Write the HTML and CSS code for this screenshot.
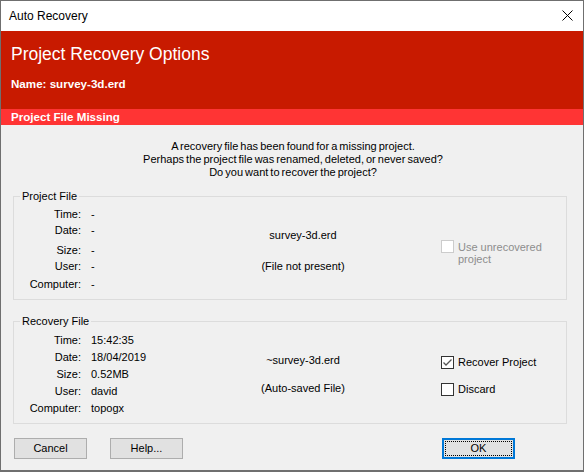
FILE: index.html
```html
<!DOCTYPE html>
<html>
<head>
<meta charset="utf-8">
<title>Auto Recovery</title>
<link rel="stylesheet" href="styles.css">
</head>
<body>
<div class="window">
  <div class="titlebar">
    <span class="title">Auto Recovery</span>
    <svg class="close" width="11" height="11" viewBox="0 0 11 11"><path d="M0.5 0.5 L10.5 10.5 M10.5 0.5 L0.5 10.5" stroke="#000" stroke-width="1" fill="none"/></svg>
  </div>
  <div class="header">
    <div class="header-title">Project Recovery Options</div>
    <div class="header-name">Name: survey-3d.erd</div>
  </div>
  <div class="subbar">Project File Missing</div>
  <div class="content">
    <div class="message">A recovery file has been found for a missing project.<br>Perhaps the project file was renamed, deleted, or never saved?<br>Do you want to recover the project?</div>

    <div class="group group-project">
      <div class="group-title">Project File</div>
      <div class="group-row">
        <div class="info info-project">
          <span class="lbl">Time:</span><span class="val">-</span>
          <span class="lbl">Date:</span><span class="val">-</span>
          <span class="lbl">Size:</span><span class="val">-</span>
          <span class="lbl">User:</span><span class="val">-</span>
          <span class="lbl">Computer:</span><span class="val">-</span>
        </div>
        <div class="file file-project">
          <div class="file-line">survey-3d.erd</div>
          <div class="file-line">(File not present)</div>
        </div>
        <div class="options options-project">
          <div class="check disabled">
            <span class="box"></span>
            <span class="check-label">Use unrecovered<br>project</span>
          </div>
        </div>
      </div>
    </div>

    <div class="group group-recovery">
      <div class="group-title">Recovery File</div>
      <div class="group-row">
        <div class="info info-recovery">
          <span class="lbl">Time:</span><span class="val">15:42:35</span>
          <span class="lbl">Date:</span><span class="val">18/04/2019</span>
          <span class="lbl">Size:</span><span class="val">0.52MB</span>
          <span class="lbl">User:</span><span class="val">david</span>
          <span class="lbl">Computer:</span><span class="val">topogx</span>
        </div>
        <div class="file file-recovery">
          <div class="file-line">~survey-3d.erd</div>
          <div class="file-line">(Auto-saved File)</div>
        </div>
        <div class="options options-recovery">
          <div class="check">
            <span class="box"><svg width="11" height="11" viewBox="0 0 11 11"><path d="M1.5 5.5 L4 8 L9.5 2.5" stroke="#555" stroke-width="1.3" fill="none"/></svg></span>
            <span class="check-label">Recover Project</span>
          </div>
          <div class="check">
            <span class="box"></span>
            <span class="check-label">Discard</span>
          </div>
        </div>
      </div>
    </div>

    <div class="buttons">
      <div class="btn">Cancel</div>
      <div class="btn btn-help">Help...</div>
      <div class="btn btn-ok"><span class="focus">OK</span></div>
    </div>
  </div>
</div>
</body>
</html>
```
FILE: styles.css
```css
* { box-sizing: border-box; }
html, body { margin: 0; padding: 0; }
body {
  font-family: "Liberation Sans", Arial, sans-serif;
  font-size: 11px;
  color: #000;
  background: #f0f0f0;
}
.window {
  width: 584px;
  height: 472px;
  border: 1px solid #6f6f6f;
  border-bottom-width: 2px;
  background: #f0f0f0;
  display: flex;
  flex-direction: column;
  overflow: hidden;
}
.titlebar {
  height: 30px;
  background: #fff;
  display: flex;
  align-items: center;
  justify-content: space-between;
  padding: 0 10px 0 8px;
}
.title {
  font-size: 12px;
  line-height: 30px;
}
.close { display: block; margin-top: -1px; }
.header {
  height: 78px;
  background: #c81a00;
  color: #fff;
  padding: 13px 10px 0;
}
.header-title {
  font-size: 17.5px;
  line-height: 20px;
}
.header-name {
  font-size: 11.6px;
  font-weight: bold;
  line-height: 14px;
  margin-top: 13px;
}
.subbar {
  height: 16px;
  background: #ff3434;
  color: #fff;
  font-size: 11.6px;
  font-weight: bold;
  line-height: 16px;
  padding-left: 10px;
}
.content {
  flex: 1;
  display: flex;
  flex-direction: column;
  padding-top: 15px;
}
.message {
  text-align: center;
  line-height: 13px;
  word-spacing: -1px;
  padding-left: 2px;
}
.group {
  margin: 17px 16px 0 12px;
  border: 1px solid #dcdcdc;
  padding-bottom: 8px;
}
.group-recovery { margin-top: 21px; }
.group-title {
  margin: -7px 0 0 6px;
  padding: 0 2px;
  align-self: flex-start;
  width: max-content;
  background: #f0f0f0;
  line-height: 13px;
}
.group-row {
  display: flex;
  margin-top: 5px;
}
.group-recovery .group-row { margin-top: 6px; }
.info {
  width: 170px;
  display: grid;
  grid-template-columns: 67px auto;
  column-gap: 10px;
  line-height: 13px;
}
.info-project { grid-template-rows: 16px 20px 16px 18px 13px; }
.info-recovery { grid-template-rows: 17px 17px 17px 17px 13px; }
.lbl { text-align: right; }
.file {
  width: 238px;
  display: flex;
  flex-direction: column;
  align-items: center;
  line-height: 13px;
}
.file-project { padding-top: 21px; gap: 18px; }
.file-recovery { padding-top: 20px; gap: 15px; }
.options {
  flex: 1;
  padding-left: 19px;
  display: flex;
  flex-direction: column;
}
.options-project { padding-top: 32px; }
.options-recovery { padding-top: 22px; gap: 14px; }
.check {
  display: flex;
  align-items: flex-start;
  gap: 4px;
}
.box {
  width: 13px;
  height: 13px;
  border: 1px solid #333;
  background: #fff;
  flex: none;
  display: flex;
  align-items: center;
  justify-content: center;
}
.check-label { line-height: 13px; }
.check.disabled .box { border-color: #cccccc; }
.check.disabled .check-label { color: #8d8d8d; line-height: 12px; margin-top: 1px; }
.buttons {
  display: flex;
  margin-top: 14px;
  padding-left: 13px;
}
.btn {
  width: 73px;
  height: 21px;
  background: #e1e1e1;
  border: 1px solid #adadad;
  display: flex;
  align-items: center;
  justify-content: center;
  line-height: 13px;
}
.btn-help { margin-left: 23px; }
.btn-ok {
  margin-left: 259px;
  border: 2px solid #0078d7;
  padding: 1px;
}
.focus {
  flex: 1;
  align-self: stretch;
  border: 1px dotted #000;
  display: flex;
  align-items: center;
  justify-content: center;
}
```
